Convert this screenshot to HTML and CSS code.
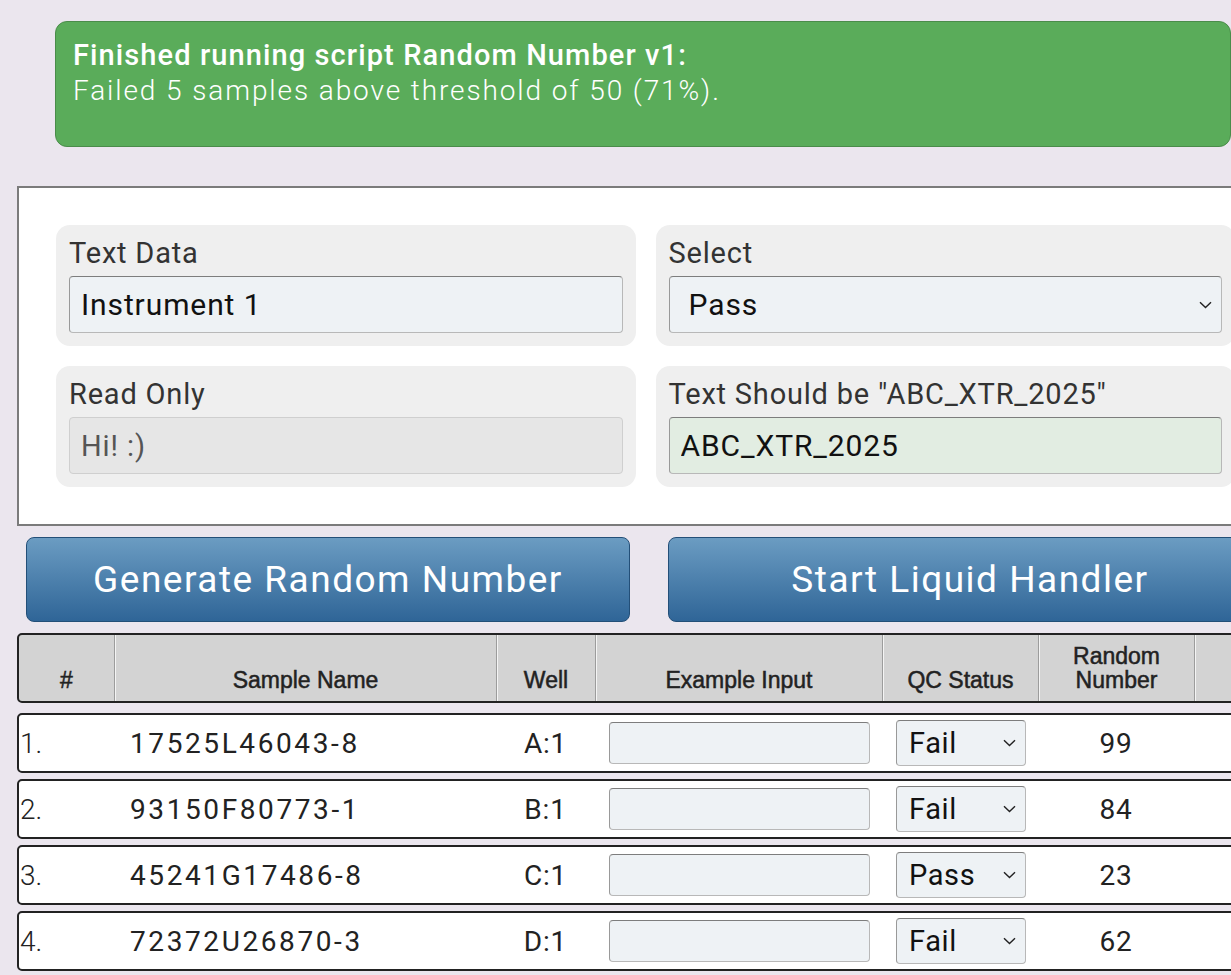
FILE: index.html
```html
<!DOCTYPE html>
<html lang="en">
<head>
<meta charset="utf-8">
<title>Script Runner</title>
<link rel="stylesheet" href="styles.css">
</head>
<body>
<div class="page">
  <div class="banner">
    <div class="banner-title">Finished running script Random Number v1:</div>
    <div class="banner-msg">Failed 5 samples above threshold of 50 (71%).</div>
  </div>

  <div class="panel">
    <div class="field">
      <label class="field-label">Text Data</label>
      <input class="text-input" type="text" value="Instrument 1">
    </div>
    <div class="field">
      <label class="field-label">Select</label>
      <div class="select-wrap select-wrap-big">
        <select class="select select-big"><option>Pass</option><option>Fail</option></select>
        <svg class="chev" width="13" height="8" viewBox="0 0 13 8"><path d="M1 1.2 L6.5 6.6 L12 1.2" fill="none" stroke="#222" stroke-width="1.4"/></svg>
      </div>
    </div>
    <div class="field">
      <label class="field-label">Read Only</label>
      <input class="text-input readonly" type="text" value="Hi! :)" readonly>
    </div>
    <div class="field">
      <label class="field-label">Text Should be "ABC_XTR_2025"</label>
      <input class="text-input valid" type="text" value="ABC_XTR_2025">
    </div>
  </div>

  <div class="actions">
    <button class="btn">Generate Random Number</button>
    <button class="btn">Start Liquid Handler</button>
  </div>

  <div class="table">
    <div class="thead">
      <div class="th">#</div>
      <div class="th">Sample Name</div>
      <div class="th">Well</div>
      <div class="th">Example Input</div>
      <div class="th">QC Status</div>
      <div class="th">Random<br>Number</div>
      <div class="th"></div>
    </div>

    <div class="trow">
      <div class="td idx">1.</div>
      <div class="td name">17525L46043-8</div>
      <div class="td well">A:1</div>
      <div class="td inp"><input class="row-input" type="text"></div>
      <div class="td qc"><div class="select-wrap select-wrap-row"><select class="select select-row"><option>Fail</option><option>Pass</option></select><svg class="chev" width="13" height="8" viewBox="0 0 13 8"><path d="M1 1.2 L6.5 6.6 L12 1.2" fill="none" stroke="#222" stroke-width="1.4"/></svg></div></div>
      <div class="td num">99</div>
      <div class="td"></div>
    </div>

    <div class="trow">
      <div class="td idx">2.</div>
      <div class="td name">93150F80773-1</div>
      <div class="td well">B:1</div>
      <div class="td inp"><input class="row-input" type="text"></div>
      <div class="td qc"><div class="select-wrap select-wrap-row"><select class="select select-row"><option>Fail</option><option>Pass</option></select><svg class="chev" width="13" height="8" viewBox="0 0 13 8"><path d="M1 1.2 L6.5 6.6 L12 1.2" fill="none" stroke="#222" stroke-width="1.4"/></svg></div></div>
      <div class="td num">84</div>
      <div class="td"></div>
    </div>

    <div class="trow">
      <div class="td idx">3.</div>
      <div class="td name">45241G17486-8</div>
      <div class="td well">C:1</div>
      <div class="td inp"><input class="row-input" type="text"></div>
      <div class="td qc"><div class="select-wrap select-wrap-row"><select class="select select-row"><option>Pass</option><option>Fail</option></select><svg class="chev" width="13" height="8" viewBox="0 0 13 8"><path d="M1 1.2 L6.5 6.6 L12 1.2" fill="none" stroke="#222" stroke-width="1.4"/></svg></div></div>
      <div class="td num">23</div>
      <div class="td"></div>
    </div>

    <div class="trow">
      <div class="td idx">4.</div>
      <div class="td name">72372U26870-3</div>
      <div class="td well">D:1</div>
      <div class="td inp"><input class="row-input" type="text"></div>
      <div class="td qc"><div class="select-wrap select-wrap-row"><select class="select select-row"><option>Fail</option><option>Pass</option></select><svg class="chev" width="13" height="8" viewBox="0 0 13 8"><path d="M1 1.2 L6.5 6.6 L12 1.2" fill="none" stroke="#222" stroke-width="1.4"/></svg></div></div>
      <div class="td num">62</div>
      <div class="td"></div>
    </div>
  </div>
</div>
</body>
</html>
```

FILE: styles.css
```css
html, body {
  margin: 0;
  padding: 0;
}

body {
  background: #ebe6ee;
  font-family: Roboto, "Liberation Sans", sans-serif;
  color: #222;
  overflow: hidden;
}

.page {
  width: 1290px;
  padding: 21px 0 0 17px;
}

/* Banner */
.banner {
  margin-left: 38px;
  width: 1176px;
  height: 126px;
  box-sizing: border-box;
  background: #5aac5a;
  border: 1px solid #4a8c4a;
  border-radius: 12px;
  padding: 15px 17px 0;
  color: #fff;
}

.banner-title {
  font-size: 29px;
  font-weight: 500;
  line-height: 36px;
  letter-spacing: 1.1px;
}

.banner-msg {
  font-size: 28px;
  font-weight: 300;
  line-height: 36px;
  letter-spacing: 1.9px;
}

/* Form panel */
.panel {
  margin-top: 39px;
  width: 1257px;
  box-sizing: border-box;
  background: #fff;
  border: 2px solid #7b7b7b;
  padding: 37px;
  display: grid;
  grid-template-columns: 1fr 1fr;
  gap: 20px;
}

.field {
  background: #efefef;
  border-radius: 14px;
  padding: 10px 13px 13px;
}

.field-label {
  display: block;
  font-size: 29px;
  line-height: 36px;
  color: #333;
  margin-bottom: 5px;
  letter-spacing: 0.8px;
}

.text-input {
  display: block;
  width: 100%;
  box-sizing: border-box;
  height: 57px;
  font-family: inherit;
  font-size: 30px;
  letter-spacing: 0.9px;
  padding: 0 11px;
  background: #eef2f5;
  border: 1px solid #b8b8b8;
  border-top-color: #7d7d7d;
  border-left-color: #999;
  border-radius: 4px;
  color: #111;
  outline: none;
}

.text-input.readonly {
  background: #e6e6e6;
  border-color: #cfcfcf;
  color: #555;
  font-size: 29px;
}

.text-input.valid {
  background: #e2ede2;
}

/* Selects */
.select-wrap {
  position: relative;
}

.select-wrap-big {
  display: block;
}

.select-wrap-row {
  display: inline-block;
  vertical-align: middle;
}

.select {
  -webkit-appearance: none;
  appearance: none;
  display: block;
  box-sizing: border-box;
  font-family: inherit;
  color: #111;
  background: #eef2f5;
  border: 1px solid #b8b8b8;
  border-top-color: #7d7d7d;
  border-left-color: #999;
  border-radius: 4px;
  outline: none;
  margin: 0;
}

.select-big {
  width: 100%;
  height: 57px;
  font-size: 30px;
  letter-spacing: 0.9px;
  padding: 0 19px;
}

.select-row {
  width: 130px;
  height: 46px;
  font-size: 29px;
  letter-spacing: 0.6px;
  padding: 0 12px;
}

.chev {
  position: absolute;
  right: 10px;
  top: 50%;
  margin-top: -4px;
  pointer-events: none;
}

/* Buttons */
.actions {
  margin-top: 11px;
  margin-left: 9px;
  display: flex;
  gap: 38px;
}

.btn {
  width: 604px;
  height: 85px;
  flex: none;
  background: linear-gradient(#6b9cc2, #2f6597);
  border: 1px solid #234f78;
  border-radius: 8px;
  color: #fff;
  font-family: Roboto, "Liberation Sans", sans-serif;
  font-size: 37px;
  letter-spacing: 1.5px;
  padding: 0;
}

/* Table */
.table {
  margin-top: 11px;
  width: 1257px;
}

.thead,
.trow {
  display: grid;
  grid-template-columns: 95px 382px 99px 287px 156px 156px 1fr;
  box-sizing: border-box;
  border: 2px solid #222;
  border-radius: 5px;
}

.thead {
  height: 70px;
  background: #d3d3d3;
}

.th {
  display: flex;
  align-items: flex-end;
  justify-content: center;
  text-align: center;
  padding-bottom: 9px;
  font-family: "Liberation Sans", Arial, sans-serif;
  font-size: 23px;
  line-height: 24px;
  color: #222;
  -webkit-text-stroke: 0.5px #222;
}

.th + .th {
  border-left: 1px solid #9c9c9c;
  box-shadow: inset 1px 0 #f4f4f4;
}

.trow {
  height: 60px;
  margin-top: 6px;
  background: #fff;
  align-items: center;
  font-size: 28px;
  letter-spacing: 2.6px;
  color: #222;
}

.thead + .trow {
  margin-top: 10px;
}

.idx {
  padding-left: 1px;
  letter-spacing: 0;
  font-weight: 300;
}

.name {
  padding-left: 16px;
}

.well {
  text-align: center;
  letter-spacing: 0.8px;
}

.inp {
  padding-left: 14px;
}

.row-input {
  display: block;
  width: 261px;
  height: 42px;
  box-sizing: border-box;
  background: #eef2f5;
  border: 1px solid #b8b8b8;
  border-top-color: #7d7d7d;
  border-left-color: #999;
  border-radius: 4px;
  outline: none;
  margin: 0;
}

.qc {
  padding-left: 14px;
}

.num {
  text-align: center;
  letter-spacing: 0.8px;
}
```
